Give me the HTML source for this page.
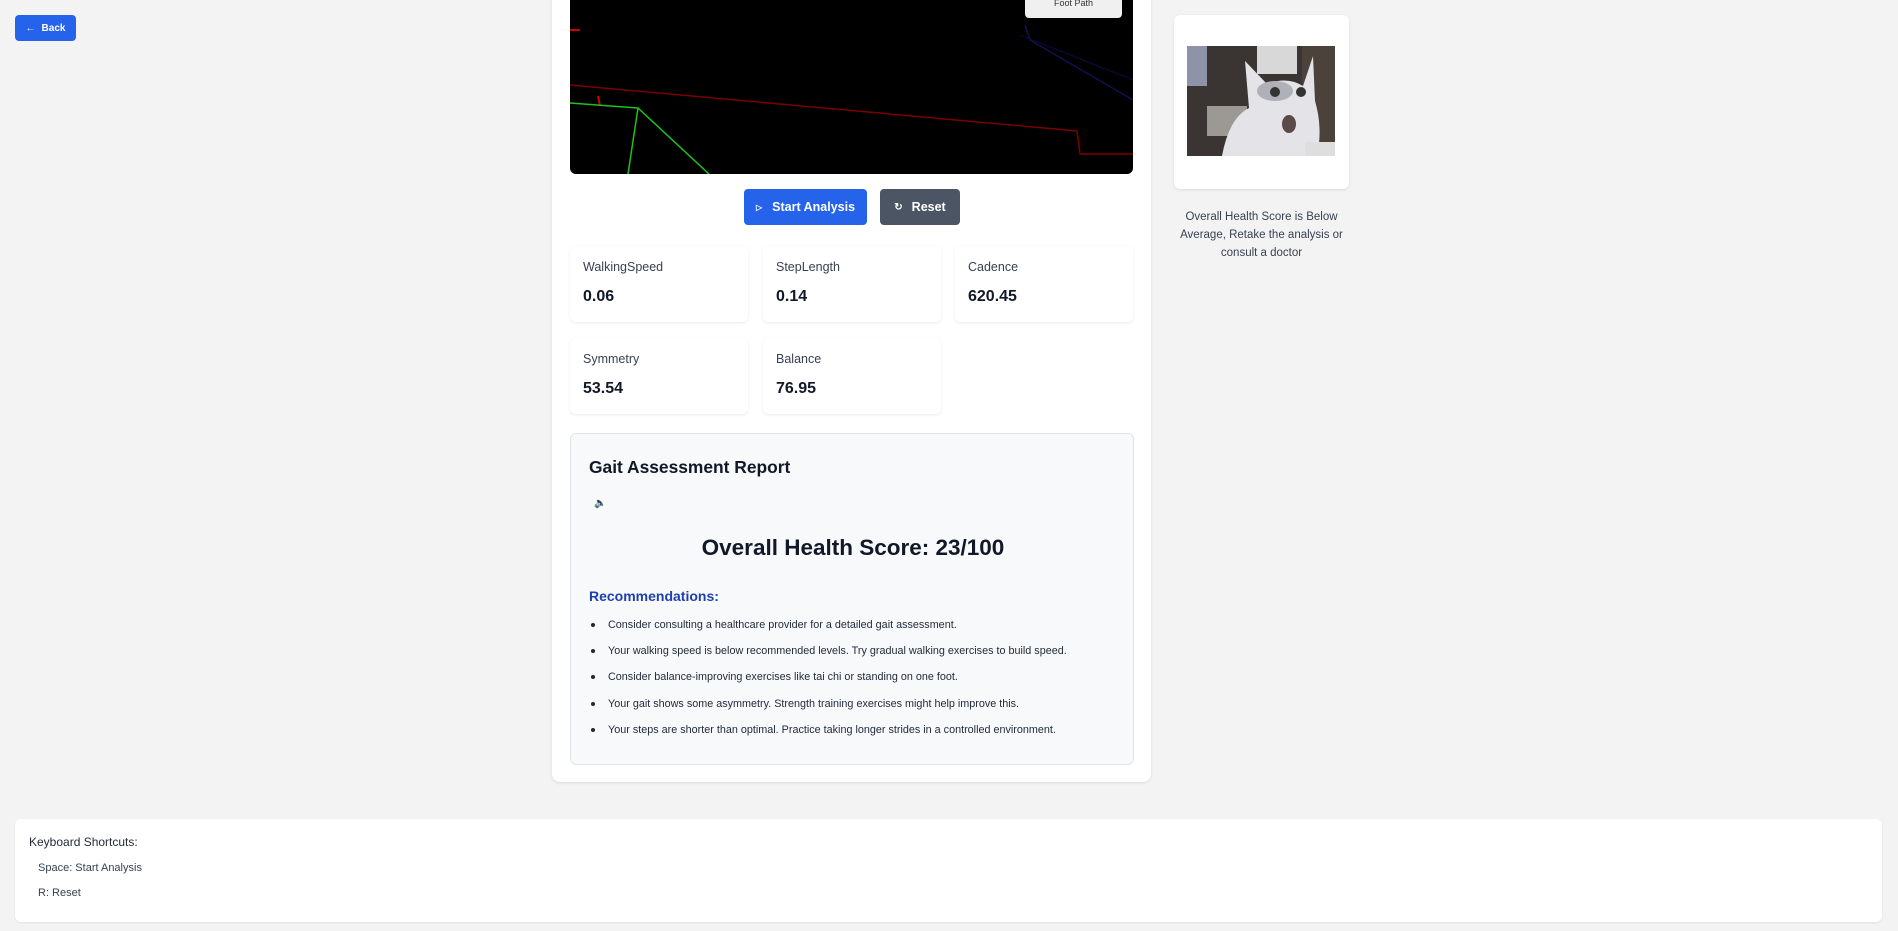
<!DOCTYPE html>
<html><head><meta charset="utf-8">
<style>
*{box-sizing:border-box;margin:0;padding:0}
body{width:1898px;height:931px;background:#f3f3f3;font-family:"Liberation Sans",sans-serif;position:relative;overflow:hidden;color:#111827}
.abs{position:absolute}
.btn{position:absolute;border-radius:4px;color:#fff;font-weight:bold;display:flex;align-items:center;justify-content:center}
.card{position:absolute;background:#fff;border-radius:6px;box-shadow:0 1px 3px rgba(0,0,0,.1)}
.metric{position:absolute;background:#fff;border-radius:6px;box-shadow:0 1px 3px rgba(0,0,0,.08);width:178px;height:76px}
.metric .l{position:absolute;left:13px;top:14px;font-size:12.5px;color:#374151}
.metric .v{position:absolute;left:13px;top:42px;font-size:16px;font-weight:bold;color:#111827}
li{position:absolute;left:37px;font-size:10.8px;line-height:13px;color:#1f2937;list-style:none}
li:before{content:"";position:absolute;left:-17px;top:4px;width:4px;height:4px;border-radius:50%;background:#1f2937}
</style></head><body>

<div class="btn" style="left:15px;top:15px;width:61px;height:26px;background:#2563eb;font-size:10px">
<span style="font-size:10px;margin-right:6px">&#8592;</span>Back</div>

<div class="card" style="left:552px;top:-20px;width:599px;height:802px;border-radius:8px"></div>

<div class="abs" style="left:570px;top:-10px;width:563px;height:184px;background:#000;border-radius:6px;overflow:hidden">
<svg width="563" height="184" viewBox="0 -10 563 184" style="position:absolute;left:0;top:0">
<polyline points="0,85 507,131 510,154 563,154" fill="none" stroke="#7a0000" stroke-width="1.5"/>
<line x1="0" y1="30" x2="10" y2="30" stroke="#c00" stroke-width="2"/>
<line x1="28" y1="96" x2="30" y2="106" stroke="#c00" stroke-width="2"/>
<polyline points="0,103 68,108 139,174" fill="none" stroke="#1dc21d" stroke-width="1.5"/>
<line x1="68" y1="108" x2="58" y2="174" stroke="#1dc21d" stroke-width="1.5"/>
<polyline points="455,25 460,40 563,100" fill="none" stroke="#101050" stroke-width="1.5"/>
<polyline points="450,35 563,80" fill="none" stroke="#0c0c40" stroke-width="1"/>
</svg>
<div class="abs" style="left:455px;top:-10px;width:97px;height:38px;background:#f0f0f0;border-radius:4px;font-size:9px;color:#333;text-align:center;padding-top:18px">Foot Path</div>
</div>

<div class="btn" style="left:744px;top:189px;width:123px;height:36px;background:#2563eb;font-size:12.5px"><span style="font-size:8px;margin-right:10px">&#9655;</span>Start Analysis</div>
<div class="btn" style="left:880px;top:189px;width:80px;height:36px;background:#4b5563;font-size:12.5px"><span style="font-size:10px;margin-right:9px">&#8635;</span>Reset</div>

<div class="metric" style="left:570px;top:246px"><div class="l">WalkingSpeed</div><div class="v">0.06</div></div>
<div class="metric" style="left:763px;top:246px"><div class="l">StepLength</div><div class="v">0.14</div></div>
<div class="metric" style="left:955px;top:246px"><div class="l">Cadence</div><div class="v">620.45</div></div>
<div class="metric" style="left:570px;top:338px"><div class="l">Symmetry</div><div class="v">53.54</div></div>
<div class="metric" style="left:763px;top:338px"><div class="l">Balance</div><div class="v">76.95</div></div>

<div class="abs" style="left:570px;top:433px;width:564px;height:332px;background:#f8f9fb;border:1px solid #e2e4e8;border-radius:6px">
<div class="abs" style="left:18px;top:23px;font-size:17.4px;font-weight:bold;color:#111827">Gait Assessment Report</div>
<div class="abs" style="left:23px;top:64px;font-size:10px">&#128264;</div>
<div class="abs" style="left:0;width:564px;top:101px;text-align:center;font-size:22.5px;font-weight:bold;color:#111827">Overall Health Score: 23/100</div>
<div class="abs" style="left:18px;top:154px;font-size:14px;font-weight:bold;color:#1e40af">Recommendations:</div>
<ul>
<li style="top:185px">Consider consulting a healthcare provider for a detailed gait assessment.</li>
<li style="top:211px">Your walking speed is below recommended levels. Try gradual walking exercises to build speed.</li>
<li style="top:237px">Consider balance-improving exercises like tai chi or standing on one foot.</li>
<li style="top:264px">Your gait shows some asymmetry. Strength training exercises might help improve this.</li>
<li style="top:290px">Your steps are shorter than optimal. Practice taking longer strides in a controlled environment.</li>
</ul>
</div>

<div class="card" style="left:1174px;top:15px;width:175px;height:174px"></div>
<svg class="abs" style="left:1187px;top:46px" width="148" height="110" viewBox="0 0 148 110">
<rect width="148" height="110" fill="#3a3533"/>
<rect x="0" y="0" width="20" height="40" fill="#8f93a8"/>
<rect x="70" y="0" width="40" height="28" fill="#d8d8d8"/>
<rect x="115" y="0" width="33" height="110" fill="#4b423c"/>
<rect x="20" y="60" width="40" height="30" fill="#9c9994"/>
<path d="M35 110 Q42 72 62 62 L58 15 L80 38 Q100 30 116 40 L126 10 L128 55 Q136 82 130 110 Z" fill="#e4e4e8"/>
<ellipse cx="88" cy="45" rx="18" ry="10" fill="#b0b0b8"/>
<circle cx="88" cy="46" r="5" fill="#333"/><circle cx="114" cy="46" r="5" fill="#333"/>
<ellipse cx="102" cy="78" rx="7" ry="9" fill="#5a4a4a"/>
<rect x="118" y="96" width="30" height="14" fill="#dedede"/>
</svg>
<div class="abs" style="left:1174px;top:208px;width:175px;text-align:center;font-size:11.5px;line-height:18px;color:#374151">Overall Health Score is Below Average, Retake the analysis or consult a doctor</div>

<div class="card" style="left:15px;top:819px;width:1867px;height:103px;box-shadow:0 1px 2px rgba(0,0,0,.08)">
<div class="abs" style="left:14px;top:16px;font-size:12px;color:#1f2937">Keyboard Shortcuts:</div>
<div class="abs" style="left:23px;top:43px;font-size:11px;color:#374151">Space: Start Analysis</div>
<div class="abs" style="left:23px;top:68px;font-size:11px;color:#374151">R: Reset</div>
</div>
</body></html>
